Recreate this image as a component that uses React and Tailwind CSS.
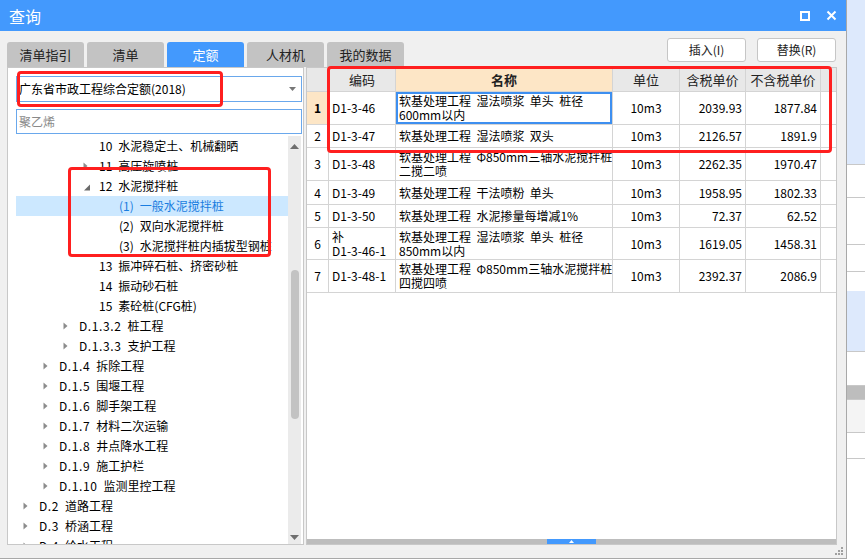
import React from 'react';

const tabs = ['清单指引', '清单', '定额', '人材机', '我的数据'];

// tree rows of the left panel (lv = indent level)
const tree = [
  { lv: 4, code: '10', text: '水泥稳定土、机械翻晒' },
  { lv: 4, code: '11', text: '高压旋喷桩', arrow: 'closed' },
  { lv: 4, code: '12', text: '水泥搅拌桩', arrow: 'open' },
  { lv: 5, code: '(1)', text: '一般水泥搅拌桩', sel: true },
  { lv: 5, code: '(2)', text: '双向水泥搅拌桩' },
  { lv: 5, code: '(3)', text: '水泥搅拌桩内插拔型钢桩' },
  { lv: 4, code: '13', text: '振冲碎石桩、挤密砂桩' },
  { lv: 4, code: '14', text: '振动砂石桩' },
  { lv: 4, code: '15', text: '素砼桩(CFG桩)' },
  { lv: 3, code: 'D.1.3.2', text: '桩工程', arrow: 'closed' },
  { lv: 3, code: 'D.1.3.3', text: '支护工程', arrow: 'closed' },
  { lv: 2, code: 'D.1.4', text: '拆除工程', arrow: 'closed' },
  { lv: 2, code: 'D.1.5', text: '围堰工程', arrow: 'closed' },
  { lv: 2, code: 'D.1.6', text: '脚手架工程', arrow: 'closed' },
  { lv: 2, code: 'D.1.7', text: '材料二次运输', arrow: 'closed' },
  { lv: 2, code: 'D.1.8', text: '井点降水工程', arrow: 'closed' },
  { lv: 2, code: 'D.1.9', text: '施工护栏', arrow: 'closed' },
  { lv: 2, code: 'D.1.10', text: '监测里控工程', arrow: 'closed' },
  { lv: 1, code: 'D.2', text: '道路工程', arrow: 'closed' },
  { lv: 1, code: 'D.3', text: '桥涵工程', arrow: 'closed' },
  { lv: 1, code: 'D.4', text: '给水工程', arrow: 'closed' },
];

const indent = {
  1: 'pl-[7px]',
  2: 'pl-[27px]',
  3: 'pl-[47px]',
  4: 'pl-[67px]',
  5: 'pl-[87px]',
};

const rows = [
  { no: '1', code: ['D1-3-46'], name: ['软基处理工程  湿法喷浆  单头  桩径', '600mm以内'], a: '2039.93', b: '1877.84', h: 'h-[33px]', sel: true },
  { no: '2', code: ['D1-3-47'], name: ['软基处理工程  湿法喷浆  双头'], a: '2126.57', b: '1891.9', h: 'h-[23px]' },
  { no: '3', code: ['D1-3-48'], name: ['软基处理工程  Φ850mm三轴水泥搅拌桩', '二搅二喷'], a: '2262.35', b: '1970.47', h: 'h-[33px]' },
  { no: '4', code: ['D1-3-49'], name: ['软基处理工程  干法喷粉  单头'], a: '1958.95', b: '1802.33', h: 'h-[24px]' },
  { no: '5', code: ['D1-3-50'], name: ['软基处理工程  水泥掺量每增减1%'], a: '72.37', b: '62.52', h: 'h-[23px]' },
  { no: '6', code: ['补', 'D1-3-46-1'], name: ['软基处理工程  湿法喷浆  单头  桩径', '850mm以内'], a: '1619.05', b: '1458.31', h: 'h-[32px]' },
  { no: '7', code: ['D1-3-48-1'], name: ['软基处理工程  Φ850mm三轴水泥搅拌桩', '四搅四喷'], a: '2392.37', b: '2086.9', h: 'h-[33px]' },
];

const Arrow = ({ type }) => (
  <span className="w-[16px] h-[20px] shrink-0">
    {type === 'closed' && (
      <svg width="16" height="20">
        <polygon points="0.5,6.5 4.5,10 0.5,13.5" fill="#8c8c8c" />
      </svg>
    )}
    {type === 'open' && (
      <svg width="16" height="20">
        <polygon points="7,8.5 7,14.5 1,14.5" fill="#6a6a6a" />
      </svg>
    )}
  </span>
);

const cell = 'border-r border-[#d4d4d4] h-full flex items-center';

export default function App() {
  return (
    <div className="relative w-[865px] h-[560px] flex bg-white overflow-hidden font-['Noto_Sans_CJK_SC',sans-serif] text-[12px] text-black">
      {/* dialog window */}
      <div className="w-[847px] h-[559px] flex flex-col bg-[#f0f0f0] border-r border-b border-[#a8a8a8]">
        {/* title bar */}
        <div className="h-[31px] shrink-0 bg-[#4399fd] flex items-center justify-between pl-[9px] pr-[9px]">
          <span className="text-white text-[16px] leading-none">查询</span>
          <div className="flex items-center gap-[16px]">
            <svg width="10" height="10">
              <rect x="1" y="1" width="8" height="8" fill="none" stroke="#fff" strokeWidth="2" />
            </svg>
            <svg width="11" height="11">
              <path d="M1.5 1.5 L9.5 9.5 M9.5 1.5 L1.5 9.5" stroke="#fff" strokeWidth="2" />
            </svg>
          </div>
        </div>

        {/* tabs + buttons */}
        <div className="h-[36px] shrink-0 flex justify-between">
          <div className="flex items-end gap-[3px] pl-[7px]">
            {tabs.map((t) => (
              <div
                key={t}
                className={
                  t === '定额'
                    ? 'w-[77px] h-[25px] rounded-t-[3px] bg-[#4399fd] text-white text-[13px] flex items-center justify-center'
                    : 'w-[77px] h-[25px] rounded-t-[3px] bg-[#c3c3c3] text-[#222] text-[13px] flex items-center justify-center'
                }
              >
                {t}
              </div>
            ))}
          </div>
          <div className="flex gap-[11px] pt-[7px] pr-[10px]">
            <button className="w-[79px] h-[24px] bg-white border border-[#c6c6c6] rounded-[3px] text-[12px] text-[#222]">插入(I)</button>
            <button className="w-[79px] h-[24px] bg-white border border-[#c6c6c6] rounded-[3px] text-[12px] text-[#222]">替换(R)</button>
          </div>
        </div>

        {/* body */}
        <div className="h-[478px] shrink-0 flex pl-[7px]">
          {/* left panel */}
          <div className="w-[297px] h-full bg-white border border-[#c8c8c8] flex flex-col pl-[8px] pr-[1px] pt-[8px]">
            <div className="h-[26px] w-[286px] shrink-0 border border-[#6aa8ec] flex items-center justify-between pl-[2px] pr-[5px]">
              <span className="leading-none">广东省市政工程综合定额(2018)</span>
              <svg width="7" height="4">
                <polygon points="0,0 7,0 3.5,4" fill="#777" />
              </svg>
            </div>
            <div className="h-[25px] w-[286px] shrink-0 mt-[7px] border border-[#6aa8ec] flex items-center pl-[2px] text-[#8a8a8a]">
              聚乙烯
            </div>
            <div className="flex-1 mt-[2px] flex min-h-0">
              <div className="w-[272px] overflow-hidden">
                {tree.map((r) => (
                  <div
                    key={r.code}
                    className={
                      'h-[20px] flex items-center whitespace-nowrap ' +
                      indent[r.lv] +
                      (r.sel ? ' bg-[#cce8ff] text-[#1a7de0]' : '')
                    }
                  >
                    <Arrow type={r.arrow} />
                    <span className={r.lv < 4 ? 'leading-none tracking-[0.6px] mr-[6px]' : 'leading-none mr-[6px]'}>{r.code}</span>
                    <span className="leading-none">{r.text}</span>
                  </div>
                ))}
              </div>
              {/* scrollbar */}
              <div className="w-[13px] bg-[#ebebeb] flex flex-col items-center">
                <div className="h-[20px] flex items-center">
                  <svg width="9" height="5">
                    <polygon points="0,5 9,5 4.5,0" fill="#6e6e6e" />
                  </svg>
                </div>
                <div className="h-[114px]" />
                <div className="h-[149px] w-[8px] rounded-full bg-[#c3c3c3]" />
                <div className="flex-1" />
                <div className="h-[14px] flex items-center">
                  <svg width="9" height="5">
                    <polygon points="0,0 9,0 4.5,5" fill="#6e6e6e" />
                  </svg>
                </div>
              </div>
            </div>
          </div>

          {/* right panel */}
          <div className="w-[531px] h-full ml-[2px] bg-white border border-[#c8c8c8] flex flex-col">
            <div className="flex h-[24px] shrink-0 border-b border-[#d4d4d4] bg-[#e8e8e8] text-[13px] text-[#222]">
              <div className={cell + ' w-[22px]'} />
              <div className={cell + ' w-[67px] justify-center'}>编码</div>
              <div className={cell + ' w-[217px] justify-center bg-[#fde6c6] font-bold'}>名称</div>
              <div className={cell + ' w-[67px] justify-center'}>单位</div>
              <div className={cell + ' w-[66px] justify-center'}>含税单价</div>
              <div className={cell + ' w-[75px] justify-center'}>不含税单价</div>
            </div>
            {rows.map((r) => (
              <div key={r.no} className={'flex shrink-0 border-b border-[#d4d4d4] ' + r.h}>
                <div className={cell + ' w-[22px] justify-center ' + (r.sel ? 'bg-[#fde6c6] font-bold' : '')}>{r.no}</div>
                <div className={cell + ' w-[67px] pl-[3px]'}>
                  <div className="leading-[14px]">
                    {r.code.map((c) => (
                      <div key={c}>{c}</div>
                    ))}
                  </div>
                </div>
                <div
                  className={
                    cell +
                    ' w-[217px] pl-[3px] overflow-hidden ' +
                    (r.sel ? 'shadow-[inset_0_0_0_2px_#3d8ff0]' : '')
                  }
                >
                  <div className="leading-[14px] whitespace-pre">
                    {r.name.map((n) => (
                      <div key={n}>{n}</div>
                    ))}
                  </div>
                </div>
                <div className={cell + ' w-[67px] justify-center'}>10m3</div>
                <div className={cell + ' w-[66px] justify-end pr-[3px]'}>{r.a}</div>
                <div className={cell + ' w-[75px] justify-end pr-[3px]'}>{r.b}</div>
              </div>
            ))}
            <div className="flex-1" />
            <div className="h-[5px] shrink-0 bg-[#bdbdbd] flex">
              <div className="w-[240px]" />
              <div className="w-[49px] bg-[#4399fd] flex items-center justify-center">
                <svg width="5" height="3">
                  <polygon points="0,3 5,3 2.5,0" fill="#fff" />
                </svg>
              </div>
            </div>
          </div>
        </div>
      </div>

      {/* background app strip on the right */}
      <div className="flex-1 flex flex-col">
        <div className="h-[165px] bg-[#dde9fc] border-b border-[#c8c8c8]" />
        <div className="h-[33px] border-b border-[#c8c8c8]" />
        <div className="h-[47px] border-b border-[#c8c8c8]" />
        <div className="h-[27px] border-b border-[#c8c8c8]" />
        <div className="h-[19px]" />
        <div className="h-[61px] bg-[#dde9fc] border-b border-[#c8c8c8]" />
        <div className="h-[34px] border-b border-[#c8c8c8]" />
        <div className="h-[14px] bg-[#bdbdbd] border-b border-[#c8c8c8]" />
        <div className="h-[33px] bg-[#f4f4f4] border-b border-[#c8c8c8]" />
        <div className="h-[26px] border-b border-[#c8c8c8]" />
        <div className="flex-1" />
      </div>

      {/* resize grip */}
      <svg className="absolute left-[835px] top-[547px]" width="9" height="9">
        <rect x="6" y="0" width="2" height="2" fill="#a0a0a0" />
        <rect x="3" y="3" width="2" height="2" fill="#a0a0a0" />
        <rect x="6" y="3" width="2" height="2" fill="#a0a0a0" />
        <rect x="0" y="6" width="2" height="2" fill="#a0a0a0" />
        <rect x="3" y="6" width="2" height="2" fill="#a0a0a0" />
        <rect x="6" y="6" width="2" height="2" fill="#a0a0a0" />
      </svg>

      {/* red annotation boxes */}
      <div className="absolute left-[17px] top-[71px] w-[206px] h-[36px] border-[3px] border-[#ff1f1f] rounded-[4px]" />
      <div className="absolute left-[68px] top-[167px] w-[203px] h-[90px] border-[3px] border-[#ff1f1f] rounded-[4px]" />
      <div className="absolute left-[327px] top-[66px] w-[505px] h-[87px] border-[3px] border-[#ff1f1f] rounded-[4px]" />
    </div>
  );
}
